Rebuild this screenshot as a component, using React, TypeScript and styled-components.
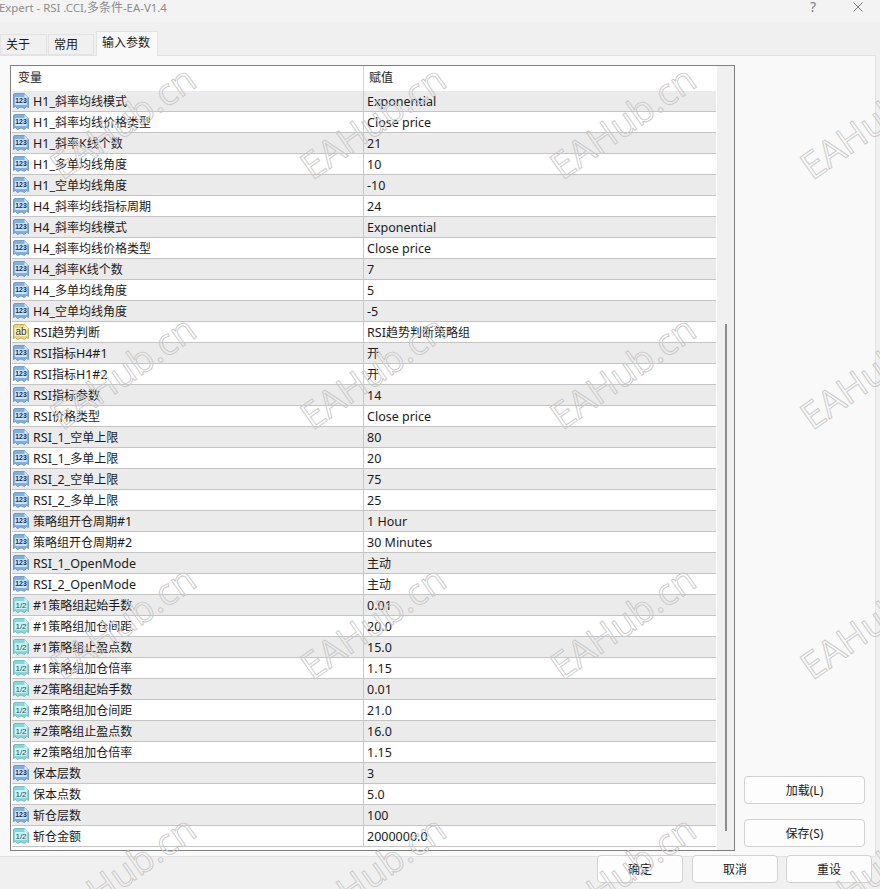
import React from "react";
import styled, { createGlobalStyle } from "styled-components";

const Global = createGlobalStyle`
  html, body { margin: 0; padding: 0; background: #f0f0f0; }
  #root { width: 880px; height: 889px; }
  * { box-sizing: border-box; }
`;

const FONT = `"Noto Sans", "Noto Sans CJK SC", sans-serif`;

const Window = styled.div`
  position: relative;
  width: 880px;
  height: 889px;
  overflow: hidden;
  display: flex;
  flex-direction: column;
  background: #f0f0f0;
  font-family: ${FONT};
  font-size: 12.5px;
  color: #1a1a1a;
`;

const Cjk = styled.span`
  font-size: 12px;
`;

const TitleBar = styled.div`
  height: 22px;
  flex: none;
  background: #f3f3f3;
  display: flex;
  align-items: center;
  justify-content: space-between;
  color: #8c8c8c;
  font-size: 11.4px;
`;

const TitleText = styled.div`
  margin-top: -8px;
  margin-left: -1px;
`;

const TitleControls = styled.div`
  display: flex;
  align-items: center;
  gap: 37px;
  padding-right: 17px;
  margin-top: -8px;
`;

const Help = styled.span`
  font-size: 14px;
  color: #808080;
  line-height: 14px;
`;

const TabBar = styled.div`
  height: 33px;
  flex: none;
  display: flex;
  align-items: flex-end;
`;

const Tab = styled.div<{ $active?: boolean; $w: number }>`
  height: ${(p) => (p.$active ? 25 : 21)}px;
  width: ${(p) => p.$w}px;
  margin-left: ${(p) => (p.$active ? 1 : 0)}px;
  margin-right: ${(p) => (p.$active ? 0 : 1)}px;
  margin-bottom: ${(p) => (p.$active ? -1 : 0)}px;
  position: relative;
  z-index: ${(p) => (p.$active ? 2 : 0)};
  background: ${(p) => (p.$active ? "#f9f9f9" : "#f0f0f0")};
  border: 1px solid #e3e3e3;
  border-bottom: ${(p) => (p.$active ? "none" : "1px solid #e3e3e3")};
  padding-left: 5px;
  line-height: ${(p) => (p.$active ? 22 : 19)}px;
  font-size: 12px;
  color: #1a1a1a;
`;

const Panel = styled.div`
  width: 876px;
  height: 802px;
  flex: none;
  background: #f9f9f9;
  border: 1px solid #e3e3e3;
  border-left: none;
  padding: 9px 9px 0 10px;
  display: flex;
  gap: 9px;
`;

const Frame = styled.div`
  width: 725px;
  height: 786px;
  flex: none;
  border: 1px solid #7f7f7f;
  background: #fff;
  padding-left: 1px;
  display: flex;
`;

const TableArea = styled.div`
  width: 704px;
  flex: none;
`;

const HeaderRow = styled.div`
  height: 25px;
  display: grid;
  grid-template-columns: 351px 1fr;
  background: #fff;
`;

const HeaderCell = styled.div<{ $value?: boolean }>`
  line-height: 24px;
  font-size: 12px;
  padding-left: ${(p) => (p.$value ? 5 : 6)}px;
  border-left: ${(p) => (p.$value ? "1px solid #d4d4d4" : "none")};
`;

const Row = styled.div<{ $odd: boolean }>`
  height: 21px;
  display: grid;
  grid-template-columns: 351px 1fr;
  background: ${(p) => (p.$odd ? "#ebebeb" : "#ffffff")};
  border-bottom: 1px solid #c4c4c4;
`;

const NameCell = styled.div`
  display: flex;
  align-items: center;
  gap: 4px;
  padding-left: 1px;
  white-space: nowrap;
  overflow: hidden;
`;

const NameText = styled.span`
  display: block;
  height: 20px;
  line-height: 22px;
`;

const ValueCell = styled.div`
  border-left: 1px solid #c8c8c8;
  padding-left: 3px;
  height: 20px;
  line-height: 22px;
  white-space: nowrap;
`;

const Track = styled.div`
  width: 17px;
  flex: none;
  margin-left: 1px;
  background: #f0f0f0;
  display: flex;
  justify-content: center;
  align-items: flex-start;
  padding-top: 258px;
`;

const Thumb = styled.div`
  width: 2px;
  height: 507px;
  background: #8a8a8a;
`;

const Side = styled.div`
  width: 121px;
  flex: none;
  display: flex;
  flex-direction: column;
  justify-content: flex-end;
  gap: 15px;
  padding-bottom: 9px;
`;

const Button = styled.div<{ $w?: number }>`
  width: ${(p) => p.$w ?? 121}px;
  height: 28px;
  background: #fdfdfd;
  border: 1px solid #d2d2d2;
  border-radius: 4px;
  display: flex;
  align-items: center;
  justify-content: center;
  font-size: 12px;
  color: #1a1a1a;
`;

const Footer = styled.div`
  margin-top: -2px;
  position: relative;
  z-index: 1;
  display: flex;
  justify-content: flex-end;
  gap: 8px;
  padding-right: 8px;
  & > :first-child {
    margin-right: 1px;
  }
`;

const WatermarkLayer = styled.div`
  position: absolute;
  top: -4px;
  left: -3px;
  display: grid;
  grid-template-columns: repeat(4, 250px);
  grid-auto-rows: 250px;
  pointer-events: none;
  z-index: 5;
`;

const Mark = styled.div`
  display: flex;
  align-items: center;
  justify-content: center;
  font-family: "Open Sans", sans-serif;
  font-size: 37px;
  white-space: nowrap;
  color: transparent;
  -webkit-text-stroke: 0.9px #c8c8c8;
  transform: rotate(-35deg);
`;

const CloseIcon = () => (
  <svg width="10" height="10" viewBox="0 0 10 10">
    <path d="M0.5 0.5L9.5 9.5M9.5 0.5L0.5 9.5" stroke="#7a7a7a" strokeWidth="1" fill="none" />
  </svg>
);

type Kind = "i" | "s" | "d";
const palette: Record<Kind, { a: string; b: string; edge: string; ink: string; label: string; size: number; y: number }> = {
  i: { a: "#cfe4f8", b: "#7fb0e0", edge: "#5f8fc2", ink: "#0f2c5c", label: "123", size: 6.8, y: 10.4 },
  s: { a: "#fff6c4", b: "#ecd67a", edge: "#b59a3e", ink: "#3f3410", label: "ab", size: 10, y: 10.8 },
  d: { a: "#cdf2f4", b: "#86d6de", edge: "#5cb2bc", ink: "#0f5564", label: "1/2", size: 8, y: 10.6 },
};

const TypeIcon = ({ kind }: { kind: Kind }) => {
  const c = palette[kind];
  return (
    <svg width="16" height="16" viewBox="0 0 16 16" style={{ flex: "none" }}>
      <path
        d="M0.5 2Q0.5 0.5 2 0.5H11.5L15.5 4.5V14.5L13.5 13.5L11.5 15.5L8 14L4.5 15.5L2.5 13.5L0.5 14.5Z"
        fill={c.b}
        stroke={c.edge}
        strokeWidth="0.8"
      />
      <path d="M11.5 0.5V4.5H15.5Z" fill={c.a} />
      <rect x="2" y="4" width="12" height="8" rx="1" fill={c.a} />
      <text
        x="8"
        y={c.y}
        textAnchor="middle"
        fontFamily="'Liberation Sans', sans-serif"
        fontWeight={kind === "i" ? 700 : 400}
        fontSize={c.size}
        fill={c.ink}
      >
        {c.label}
      </text>
    </svg>
  );
};

const Mixed = ({ text }: { text: string }) => (
  <>
    {text.split(/([\u4e00-\u9fff]+)/).map((part, i) =>
      i % 2 === 1 ? <Cjk key={i}>{part}</Cjk> : part
    )}
  </>
);

const rows: [Kind, string, string][] = [
  ["i", "H1_斜率均线模式", "Exponential"],
  ["i", "H1_斜率均线价格类型", "Close price"],
  ["i", "H1_斜率K线个数", "21"],
  ["i", "H1_多单均线角度", "10"],
  ["i", "H1_空单均线角度", "-10"],
  ["i", "H4_斜率均线指标周期", "24"],
  ["i", "H4_斜率均线模式", "Exponential"],
  ["i", "H4_斜率均线价格类型", "Close price"],
  ["i", "H4_斜率K线个数", "7"],
  ["i", "H4_多单均线角度", "5"],
  ["i", "H4_空单均线角度", "-5"],
  ["s", "RSI趋势判断", "RSI趋势判断策略组"],
  ["i", "RSI指标H4#1", "开"],
  ["i", "RSI指标H1#2", "开"],
  ["i", "RSI指标参数", "14"],
  ["i", "RSI价格类型", "Close price"],
  ["i", "RSI_1_空单上限", "80"],
  ["i", "RSI_1_多单上限", "20"],
  ["i", "RSI_2_空单上限", "75"],
  ["i", "RSI_2_多单上限", "25"],
  ["i", "策略组开仓周期#1", "1 Hour"],
  ["i", "策略组开仓周期#2", "30 Minutes"],
  ["i", "RSI_1_OpenMode", "主动"],
  ["i", "RSI_2_OpenMode", "主动"],
  ["d", "#1策略组起始手数", "0.01"],
  ["d", "#1策略组加仓间距", "20.0"],
  ["d", "#1策略组止盈点数", "15.0"],
  ["d", "#1策略组加仓倍率", "1.15"],
  ["d", "#2策略组起始手数", "0.01"],
  ["d", "#2策略组加仓间距", "21.0"],
  ["d", "#2策略组止盈点数", "16.0"],
  ["d", "#2策略组加仓倍率", "1.15"],
  ["i", "保本层数", "3"],
  ["d", "保本点数", "5.0"],
  ["i", "斩仓层数", "100"],
  ["d", "斩仓金额", "2000000.0"],
];

export default function App() {
  return (
    <Window>
      <Global />
      <TitleBar>
        <TitleText>
          <Mixed text="Expert - RSI .CCI,多条件-EA-V1.4" />
        </TitleText>
        <TitleControls>
          <Help>?</Help>
          <CloseIcon />
        </TitleControls>
      </TitleBar>
      <TabBar>
        <Tab $w={47}>关于</Tab>
        <Tab $w={46}>常用</Tab>
        <Tab $active $w={62}>输入参数</Tab>
      </TabBar>
      <Panel>
        <Frame>
          <TableArea>
            <HeaderRow>
              <HeaderCell>变量</HeaderCell>
              <HeaderCell $value>赋值</HeaderCell>
            </HeaderRow>
            {rows.map(([kind, name, value], i) => (
              <Row key={name} $odd={i % 2 === 0}>
                <NameCell>
                  <TypeIcon kind={kind} />
                  <NameText>
                    <Mixed text={name} />
                  </NameText>
                </NameCell>
                <ValueCell>
                  <Mixed text={value} />
                </ValueCell>
              </Row>
            ))}
          </TableArea>
          <Track>
            <Thumb />
          </Track>
        </Frame>
        <Side>
          <Button>加载(L)</Button>
          <Button>保存(S)</Button>
        </Side>
      </Panel>
      <Footer>
        <Button $w={86}>确定</Button>
        <Button $w={86}>取消</Button>
        <Button $w={86}>重设</Button>
      </Footer>
      <WatermarkLayer aria-hidden>
        {Array.from({ length: 16 }, (_, i) => (
          <Mark key={i}>EAHub.cn</Mark>
        ))}
      </WatermarkLayer>
    </Window>
  );
}
